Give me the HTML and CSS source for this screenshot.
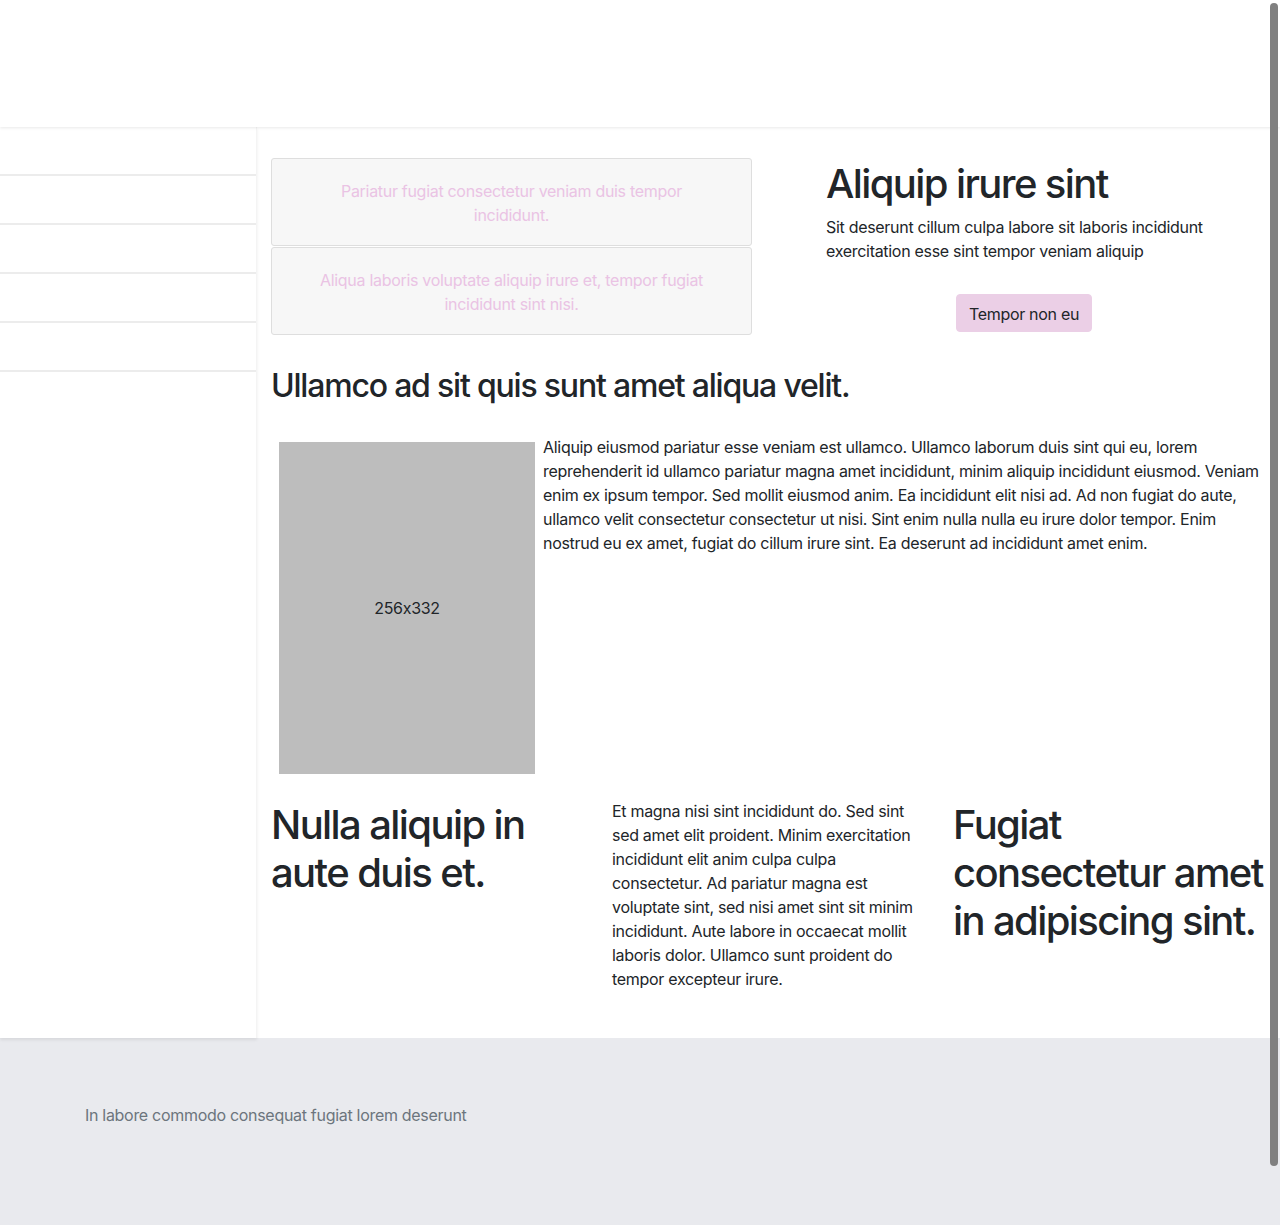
FILE: index.html
```html
<!DOCTYPE html>
<html lang="en">
<head>
<meta charset="utf-8">
<title>Page</title>
<link rel="stylesheet" href="styles.css">
</head>
<body>
<header class="topbar"></header>
<div class="layout">
  <aside class="sidebar">
    <ul class="side-list">
      <li class="side-item"></li>
      <li class="side-item"></li>
      <li class="side-item"></li>
      <li class="side-item"></li>
      <li class="side-item"></li>
    </ul>
  </aside>
  <main class="main">
    <section class="top-row">
      <div class="cards">
        <div class="card">Pariatur fugiat consectetur veniam duis tempor incididunt.</div>
        <div class="card">Aliqua laboris voluptate aliquip irure et, tempor fugiat incididunt sint nisi.</div>
      </div>
      <div class="intro">
        <h1 class="h1 intro-title">Aliquip irure sint</h1>
        <p class="intro-text">Sit deserunt cillum culpa labore sit laboris incididunt exercitation esse sint tempor veniam aliquip</p>
        <div class="btn-wrap"><button class="btn">Tempor non eu</button></div>
      </div>
    </section>
    <h2 class="h2">Ullamco ad sit quis sunt amet aliqua velit.</h2>
    <section class="media">
      <div class="placeholder">256x332</div>
      <p class="media-text">Aliquip eiusmod pariatur esse veniam est ullamco. Ullamco laborum duis sint qui eu, lorem reprehenderit id ullamco pariatur magna amet incididunt, minim aliquip incididunt eiusmod. Veniam enim ex ipsum tempor. Sed mollit eiusmod anim. Ea incididunt elit nisi ad. Ad non fugiat do aute, ullamco velit consectetur consectetur ut nisi. Sint enim nulla nulla eu irure dolor tempor. Enim nostrud eu ex amet, fugiat do cillum irure sint. Ea deserunt ad incididunt amet enim.</p>
    </section>
    <section class="cols">
      <h1 class="h1 col">Nulla aliquip in aute duis et.</h1>
      <p class="col col-text">Et magna nisi sint incididunt do. Sed sint sed amet elit proident. Minim exercitation incididunt elit anim culpa culpa consectetur. Ad pariatur magna est voluptate sint, sed nisi amet sint sit minim incididunt. Aute labore in occaecat mollit laboris dolor. Ullamco sunt proident do tempor excepteur irure.</p>
      <h1 class="h1 col">Fugiat consectetur amet in adipiscing sint.</h1>
    </section>
  </main>
</div>
<footer class="footer">
  <p class="footer-text">In labore commodo consequat fugiat lorem deserunt</p>
</footer>
<div class="scroll-thumb"></div>
</body>
</html>
```

FILE: styles.css
```css
* { box-sizing: border-box; }

html, body {
  margin: 0;
  padding: 0;
}

body {
  font-family: Inter, "Noto Sans", "Liberation Sans", sans-serif;
  font-feature-settings: "calt" 0;
  font-size: 16px;
  line-height: 24px;
  letter-spacing: -0.3px;
  color: #212529;
  background: #ffffff;
  width: 1280px;
  overflow: hidden;
}

.topbar {
  height: 127px;
  background: #fff;
  box-shadow: 0 1px 3px rgba(0, 0, 0, 0.09);
  position: relative;
  z-index: 2;
}

.layout {
  display: flex;
  height: 911px;
}

.sidebar {
  width: 257px;
  flex: none;
  border-right: 1px solid #f4f4f4;
  background: #fff;
  box-shadow: 0 2px 3px rgba(0, 0, 0, 0.08);
  position: relative;
  z-index: 1;
}

.side-list {
  list-style: none;
  margin: 0;
  padding: 0;
}

.side-item {
  height: 49px;
  border-bottom: 2px solid #ececec;
}

.main {
  flex: 1;
  padding: 31px 14px 0 14px;
}

.top-row {
  display: flex;
}

.cards {
  width: 481px;
  flex: none;
  display: flex;
  flex-direction: column;
  gap: 1px;
}

.card {
  background: #f7f7f7;
  border: 1px solid #dedede;
  border-radius: 3px;
  padding: 20px 40px 18px;
  text-align: center;
  color: #eac3e4;
}

.intro {
  flex: 1;
  padding: 2px 44px 0 74px;
}

.h1 {
  font-size: 40px;
  line-height: 48px;
  font-weight: 500;
  letter-spacing: -1.6px;
  margin: 0 0 8px;
}

.intro-title {
  margin-bottom: 7px;
}

.intro-text {
  margin: 0 0 16px;
}

.btn-wrap {
  text-align: center;
  padding-top: 15px;
}

.btn {
  font: inherit;
  letter-spacing: inherit;
  color: #212529;
  background: #ebcfe6;
  border: 1px solid #ebcfe6;
  border-radius: 4px;
  padding: 7px 12px 5px;
  line-height: 24px;
}

.h2 {
  font-size: 32px;
  line-height: 38px;
  font-weight: 500;
  letter-spacing: -1.2px;
  margin: 32px 0 0;
}

.media {
  margin-top: 30px;
  display: flow-root;
}

.placeholder {
  float: left;
  width: 256px;
  height: 332px;
  margin: 7px 8px 8px 8px;
  background: #bdbdbd;
  display: flex;
  align-items: center;
  justify-content: center;
  color: #212529;
}

.media-text {
  margin: 0;
}

.cols {
  display: grid;
  grid-template-columns: repeat(3, 313px);
  column-gap: 28px;
  margin-top: 17px;
}

.col {
  margin: 0;
}

.cols .h1 {
  margin-top: 2px;
}

.col-text {
  margin: 0;
}

.footer {
  height: 187px;
  background: #e9eaee;
  padding: 65px 85px 0;
}

.footer-text {
  margin: 0;
  color: #6c757d;
}

.scroll-thumb {
  position: fixed;
  top: 3px;
  right: 2px;
  width: 8px;
  height: 1163px;
  border-radius: 4px;
  background: #808080;
  z-index: 10;
}
```
